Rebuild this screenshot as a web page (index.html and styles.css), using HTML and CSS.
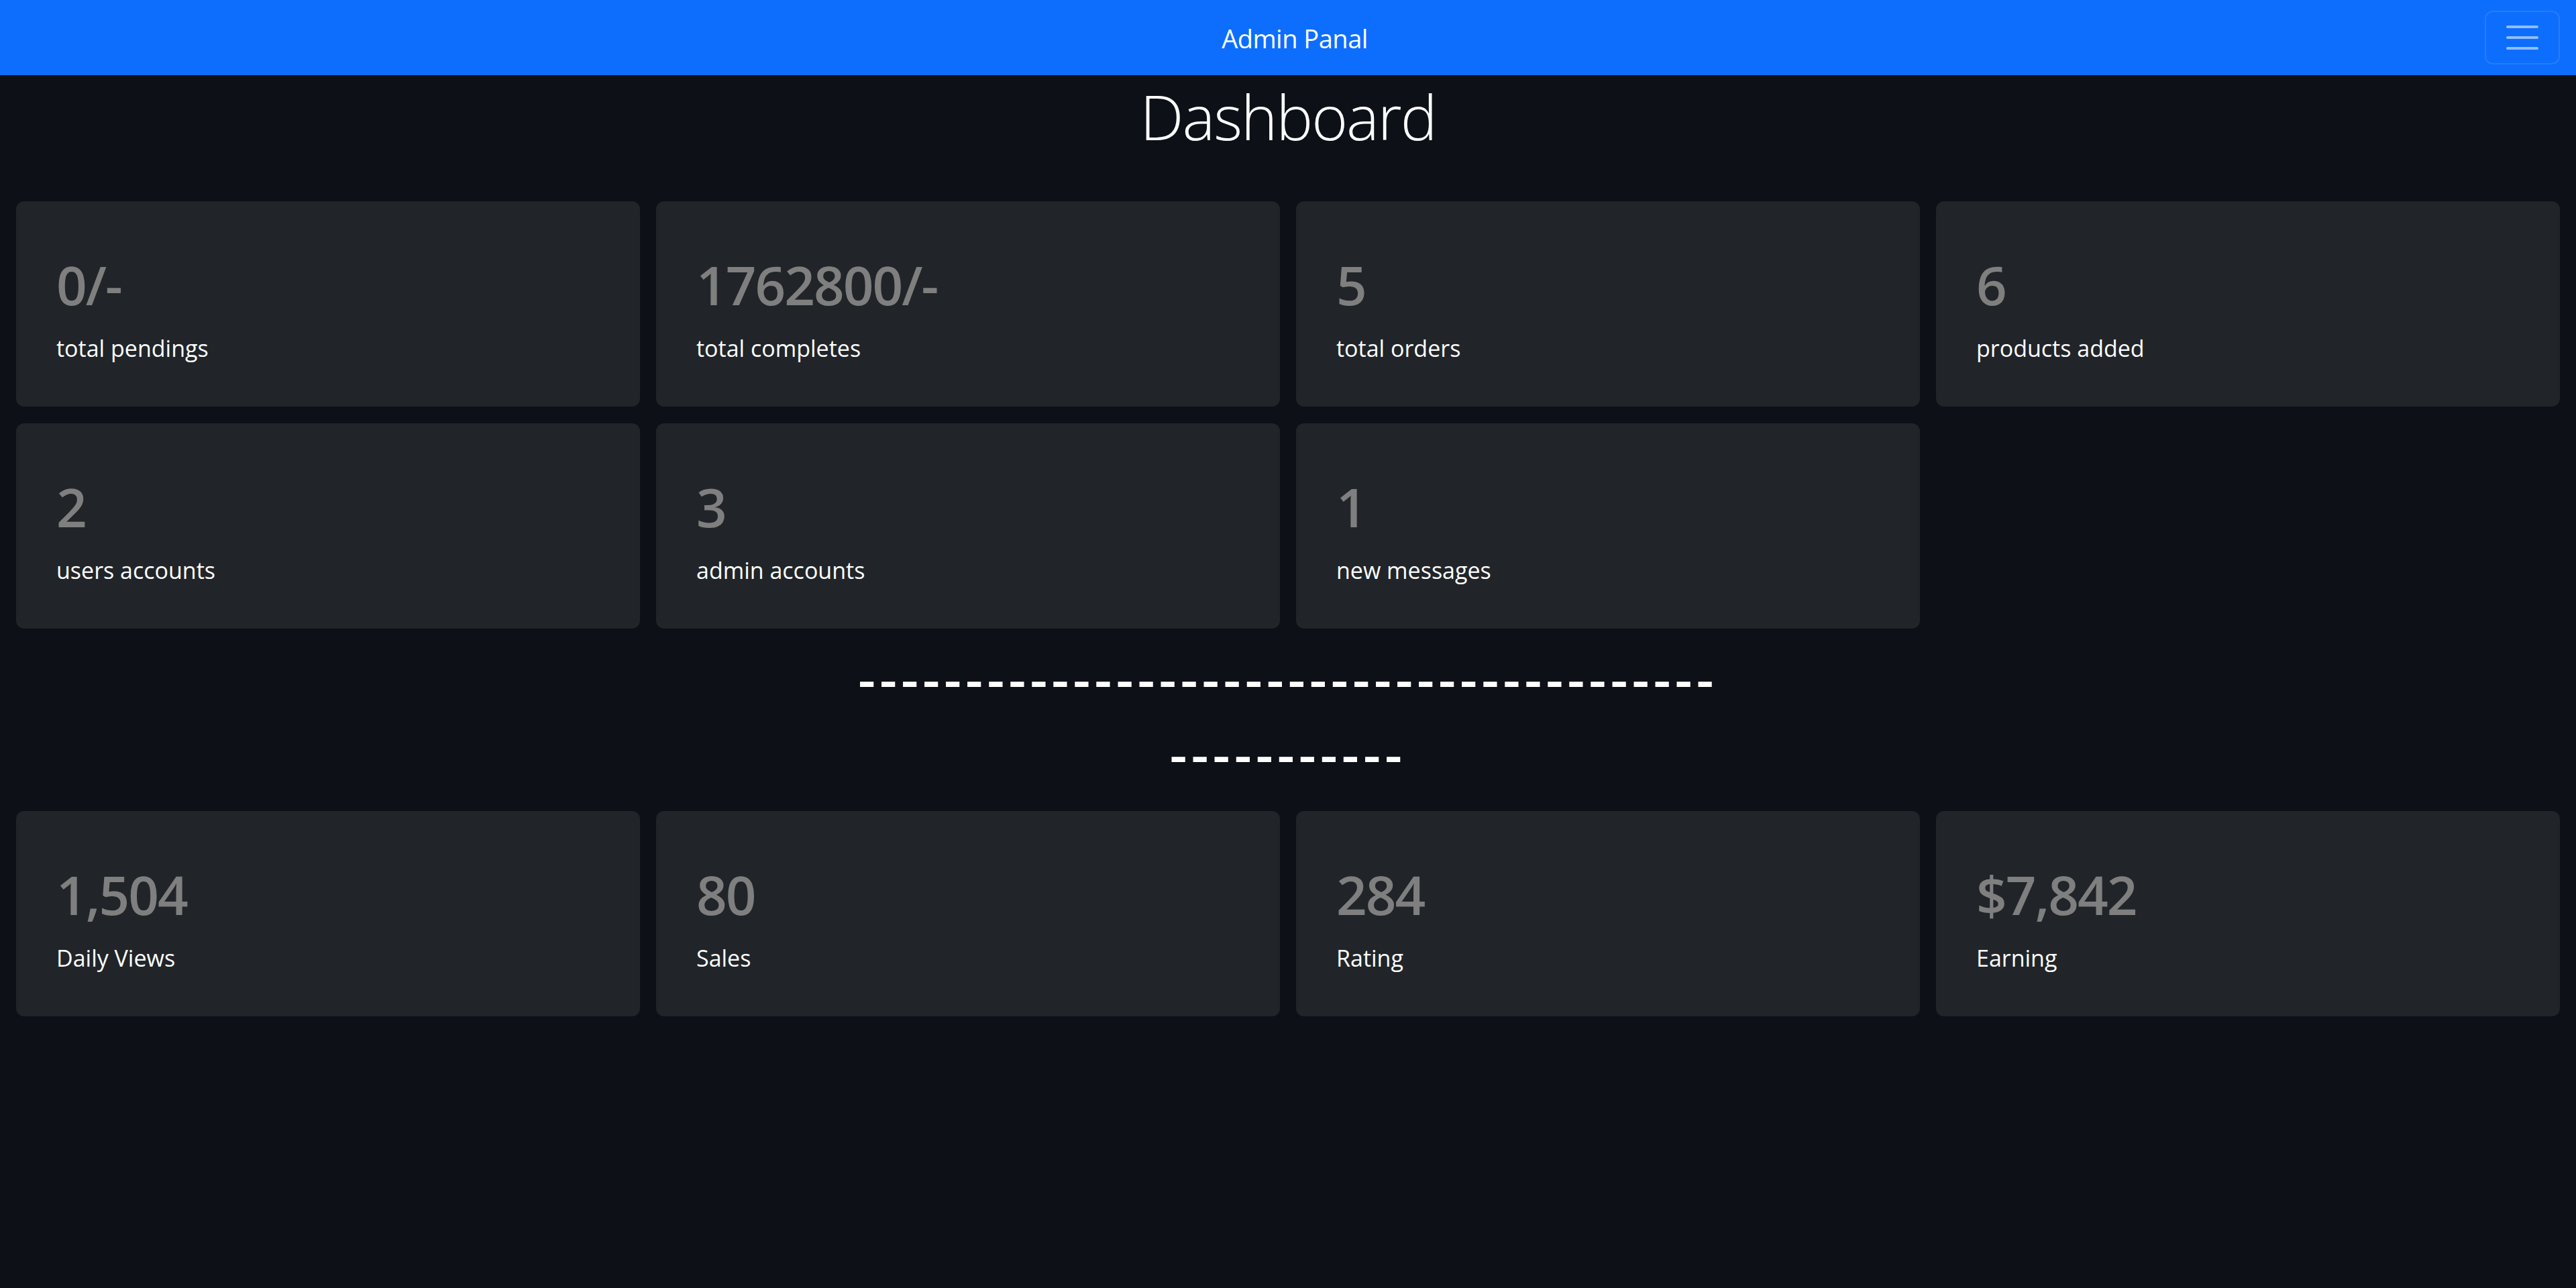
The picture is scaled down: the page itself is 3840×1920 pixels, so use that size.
FILE: index.html
```html
<!DOCTYPE html>
<html lang="en">
<head>
<meta charset="utf-8">
<title>Admin Panal</title>
<link rel="stylesheet" href="styles.css">
</head>
<body>
<nav class="navbar">
  <span class="nav-spacer"></span>
  <a class="brand" href="#">Admin Panal</a>
  <button class="toggler" type="button" aria-label="Toggle navigation">
    <svg class="toggler-icon" viewBox="0 0 30 30" width="60" height="60">
      <path d="M4 7h22M4 15h22M4 23h22" stroke="rgba(255,255,255,0.55)" stroke-width="2" stroke-linecap="round" stroke-miterlimit="10" fill="none"/>
    </svg>
  </button>
</nav>
<main class="content">
  <h1 class="page-title">Dashboard</h1>
  <section class="stats stats-top">
    <div class="card"><h2 class="stat-value">0/-</h2><p class="stat-label">total pendings</p></div>
    <div class="card"><h2 class="stat-value">1762800/-</h2><p class="stat-label">total completes</p></div>
    <div class="card"><h2 class="stat-value">5</h2><p class="stat-label">total orders</p></div>
    <div class="card"><h2 class="stat-value">6</h2><p class="stat-label">products added</p></div>
    <div class="card"><h2 class="stat-value">2</h2><p class="stat-label">users accounts</p></div>
    <div class="card"><h2 class="stat-value">3</h2><p class="stat-label">admin accounts</p></div>
    <div class="card"><h2 class="stat-value">1</h2><p class="stat-label">new messages</p></div>
  </section>
  <div class="divider">
    <p class="dash">----------------------------------------</p>
    <p class="dash">-----------</p>
  </div>
  <section class="stats stats-bottom">
    <div class="card"><h2 class="stat-value">1,504</h2><p class="stat-label">Daily Views</p></div>
    <div class="card"><h2 class="stat-value">80</h2><p class="stat-label">Sales</p></div>
    <div class="card"><h2 class="stat-value">284</h2><p class="stat-label">Rating</p></div>
    <div class="card"><h2 class="stat-value">$7,842</h2><p class="stat-label">Earning</p></div>
  </section>
</main>
</body>
</html>
```
FILE: styles.css
```css
* { box-sizing: border-box; }

html, body {
  margin: 0;
  padding: 0;
}

body {
  background: #0d1117;
  color: #ffffff;
  font-family: "Open Sans", "Noto Sans", "Liberation Sans", sans-serif;
  min-height: 1920px;
}

.navbar {
  height: 112px;
  background: #0d6efd;
  padding: 16px 24px;
  display: grid;
  grid-template-columns: 1fr auto 1fr;
  align-items: center;
}

.brand {
  color: #ffffff;
  text-decoration: none;
  font-size: 38px;
  letter-spacing: -0.5px;
  line-height: 1.5;
  padding-left: 20px;
  padding-top: 2px;
}

.toggler {
  justify-self: end;
  width: 112px;
  height: 80px;
  padding: 0;
  margin: 0;
  background: transparent;
  border: 2px solid rgba(255, 255, 255, 0.1);
  border-radius: 12px;
  display: flex;
  align-items: center;
  justify-content: center;
}

.toggler-icon {
  display: block;
}

.page-title {
  margin: 0;
  padding-top: 4px;
  font-size: 92px;
  font-weight: 300;
  letter-spacing: -2px;
  line-height: 1.25;
  text-align: center;
  color: #ffffff;
}

.stats {
  display: grid;
  grid-template-columns: repeat(4, 1fr);
  column-gap: 24px;
  row-gap: 25px;
  padding: 0 24px;
}

.stats-top {
  margin-top: 69px;
}

.stats-bottom {
  margin-top: 38px;
}

.card {
  background: #212529;
  border-radius: 12px;
  padding: 76px 60px 61px;
  height: 306px;
}

.stat-value {
  margin: 0 0 24px;
  font-size: 80px;
  font-weight: 600;
  letter-spacing: -2px;
  line-height: 1.2;
  color: #7f7f7f;
}

.stat-label {
  margin: 0;
  font-size: 34px;
  line-height: 1.41;
  color: #ffffff;
}

.divider {
  margin-top: 26px;
  text-align: center;
}

.dash {
  margin: 0 0 16px;
  font-size: 80px;
  font-weight: 600;
  line-height: 1.2;
  letter-spacing: 6.3px;
  color: #ffffff;
}
```
